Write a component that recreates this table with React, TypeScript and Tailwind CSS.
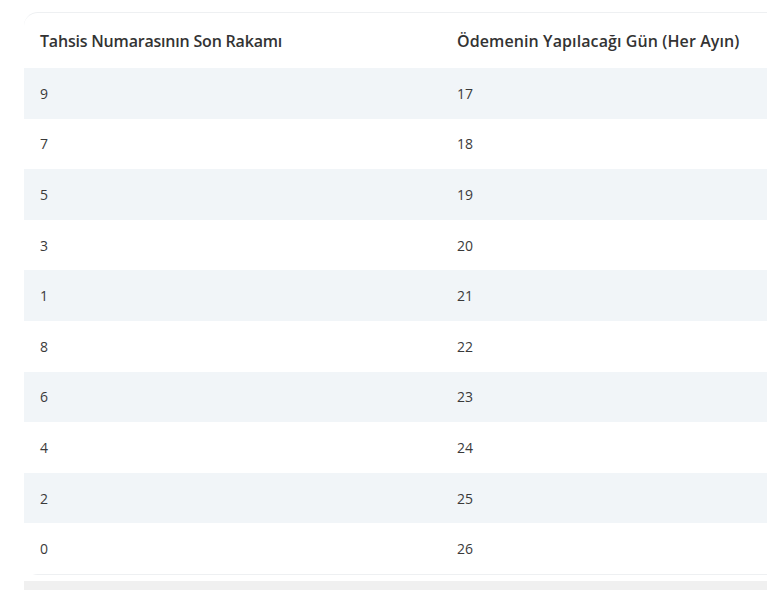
const rows: [string, string][] = [
  ['9', '17'],
  ['7', '18'],
  ['5', '19'],
  ['3', '20'],
  ['1', '21'],
  ['8', '22'],
  ['6', '23'],
  ['4', '24'],
  ['2', '25'],
  ['0', '26'],
];

export default function App() {
  return (
    <div className="w-[776px] h-[590px] bg-white overflow-hidden pt-[12px] pl-[24px] pr-[9px] font-['Open_Sans',sans-serif]">
      {/* Tablo */}
      <div className="border-t border-[#eef0f2] border-b rounded-tl-[14px] rounded-bl-[14px]">
        <div className="flex h-[55px] items-center text-[16px] font-semibold text-[#333]">
          <div className="w-[433px] pl-[16px] tracking-[-0.2px]">Tahsis Numarasının Son Rakamı</div>
          <div className="flex-1 tracking-[0.1px]">Ödemenin Yapılacağı Gün (Her Ayın)</div>
        </div>
        {rows.map(([a, b], i) => (
          <div
            key={i}
            className={`flex h-[50.6px] items-center text-[14px] font-medium text-[#3a3a3a] ${i % 2 === 0 ? 'bg-[#f1f5f8]' : 'bg-white'}`}
          >
            <div className="w-[433px] pl-[16px]">{a}</div>
            <div className="flex-1">{b}</div>
          </div>
        ))}
      </div>
      <div className="mt-[6px] h-[12px] bg-[#f0f0f0]" />
    </div>
  );
}
